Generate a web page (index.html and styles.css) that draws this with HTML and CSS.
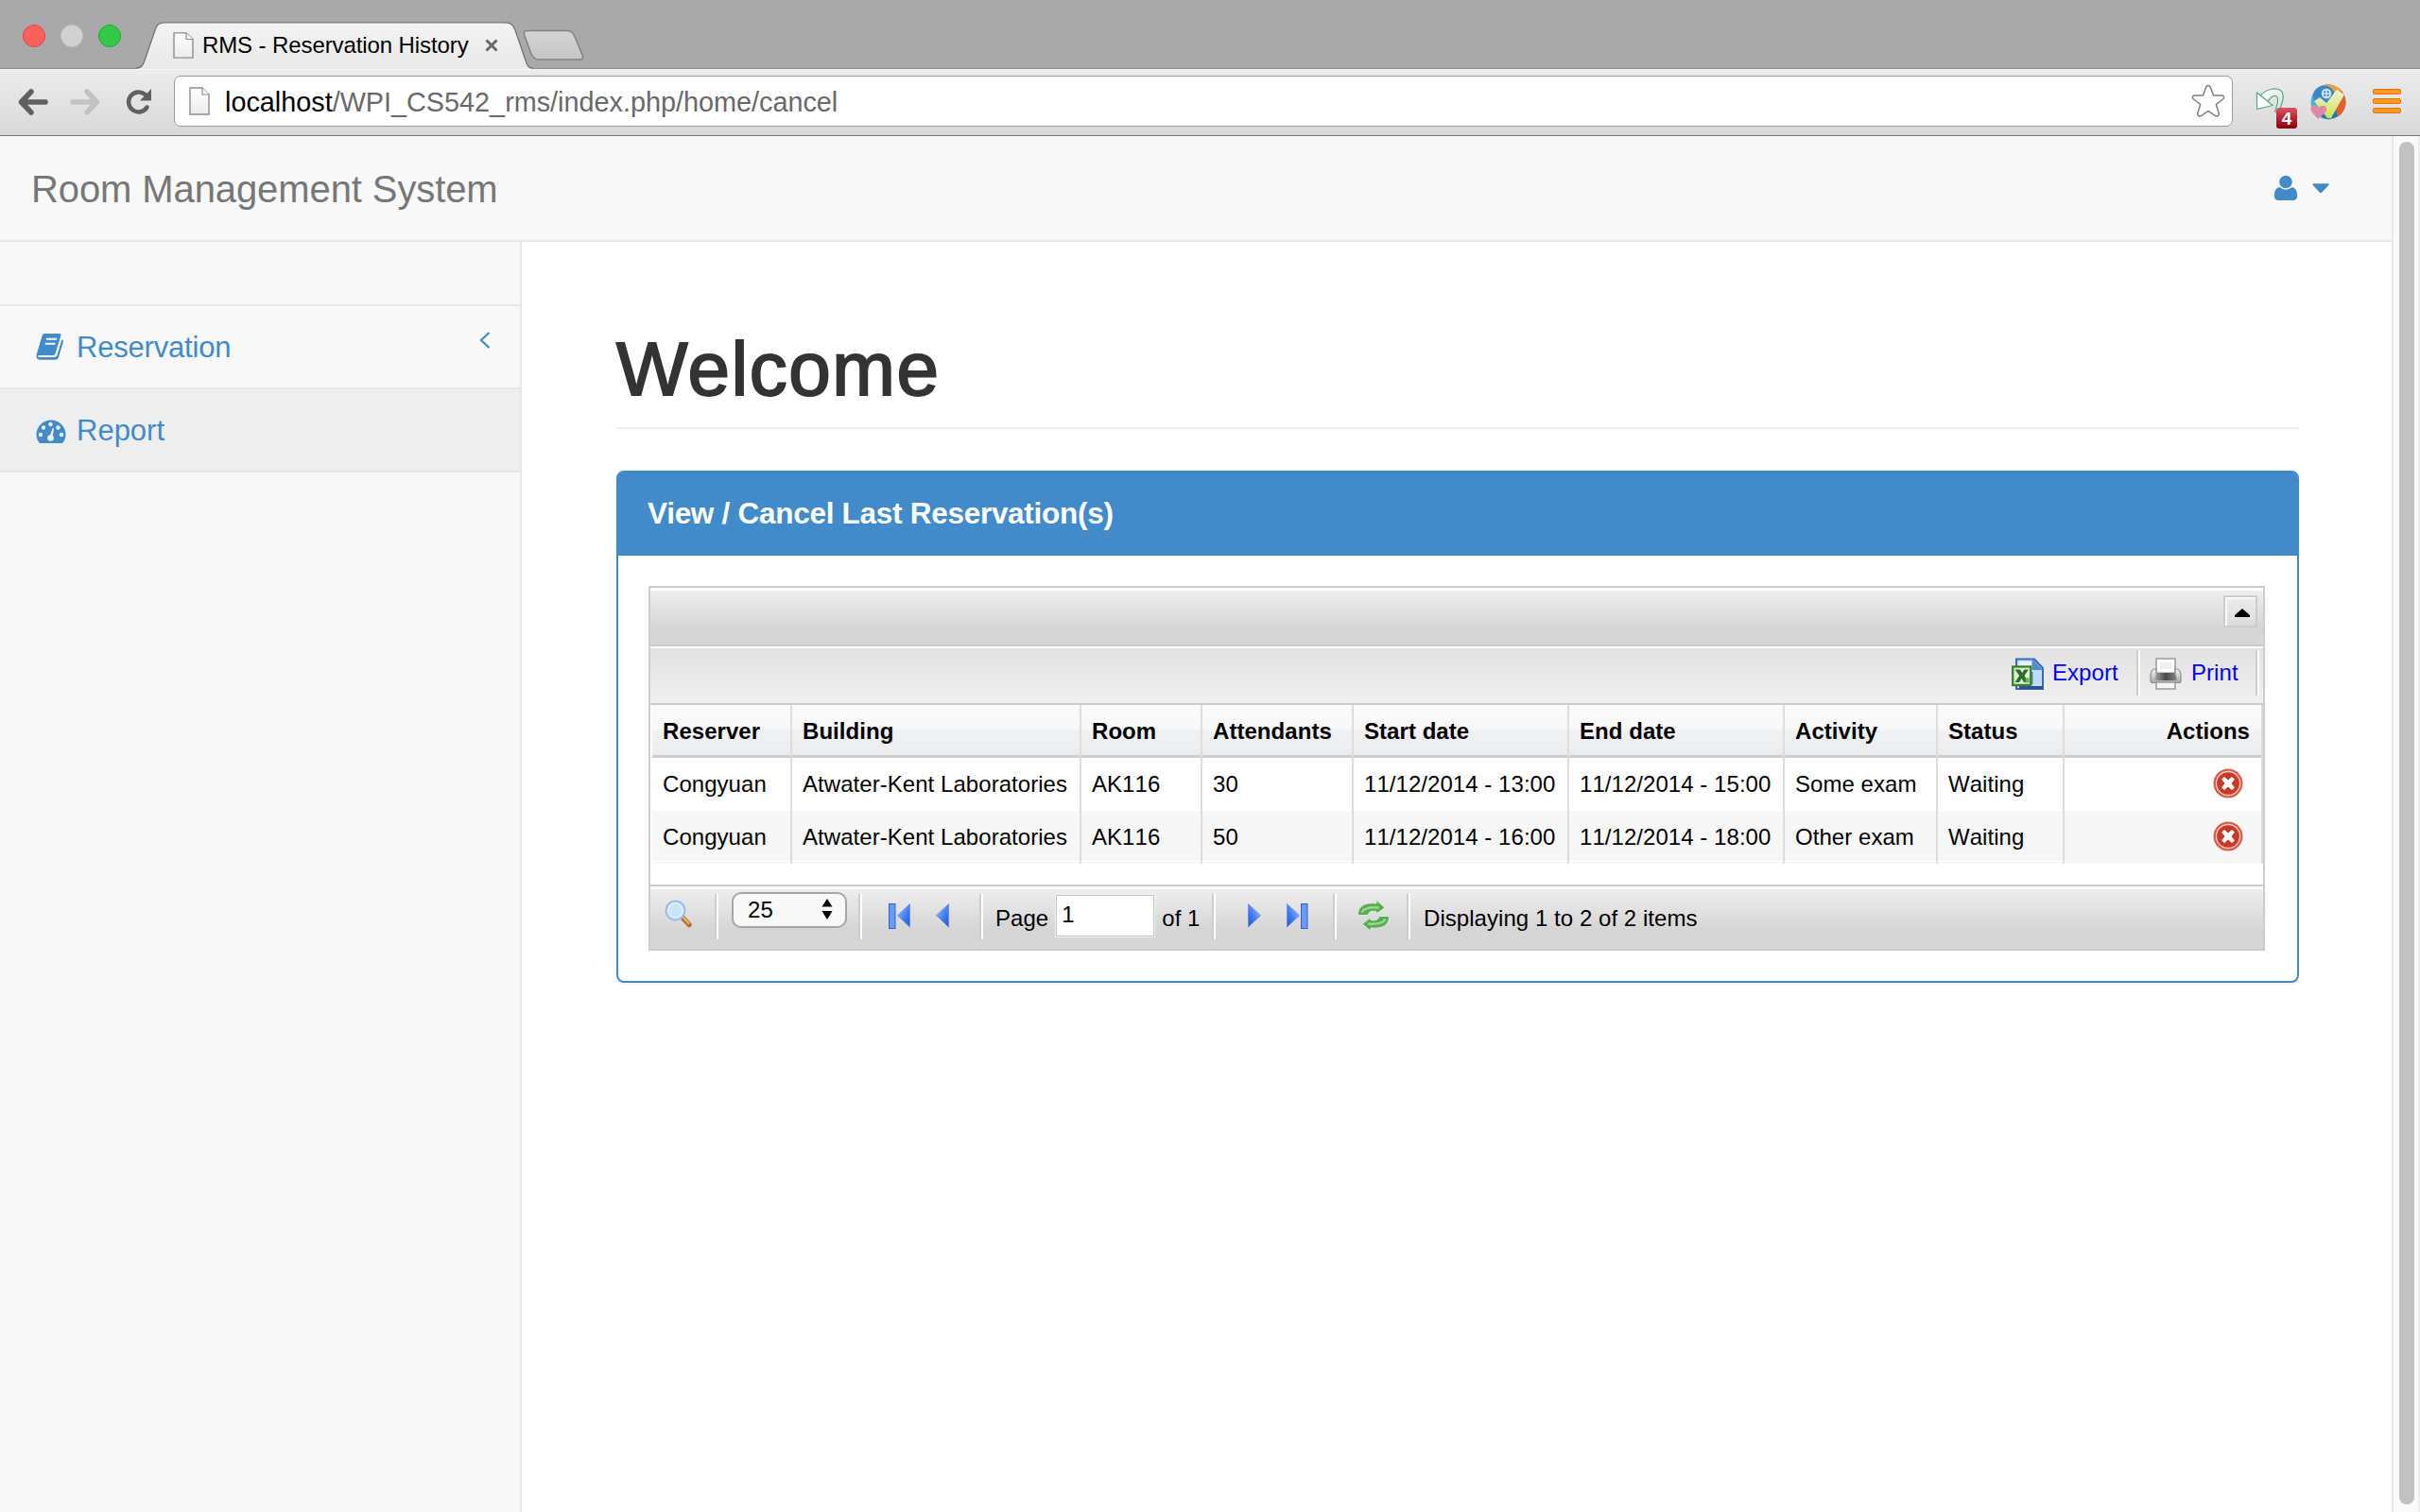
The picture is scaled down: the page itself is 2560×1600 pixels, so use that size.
FILE: index.html
```html
<!DOCTYPE html>
<html lang="en">
<head>
<meta charset="utf-8">
<title>RMS - Reservation History</title>
<link rel="stylesheet" href="styles.css">
</head>
<body>
<svg width="0" height="0" class="defs" aria-hidden="true">
  <defs>
    <linearGradient id="tabFill" x1="0" y1="0" x2="0" y2="1"><stop offset="0" stop-color="#f3f3f3"/><stop offset="1" stop-color="#e9e9e9"/></linearGradient>
    <linearGradient id="newTab" x1="0" y1="0" x2="0" y2="1"><stop offset="0" stop-color="#d4d4d4"/><stop offset="1" stop-color="#c6c6c6"/></linearGradient>
    <linearGradient id="paper" x1="0" y1="0" x2="0" y2="1"><stop offset="0" stop-color="#fff"/><stop offset="1" stop-color="#ececec"/></linearGradient>
    <linearGradient id="blue" x1="0" y1="0" x2="1" y2="1"><stop offset="0" stop-color="#a5c8ff"/><stop offset=".6" stop-color="#3f7af3"/><stop offset="1" stop-color="#2055d0"/></linearGradient>
    <linearGradient id="check" x1="0" y1="0" x2="0" y2="1"><stop offset="0" stop-color="#f4f3d8"/><stop offset="1" stop-color="#c5e64d"/></linearGradient>
    <linearGradient id="undo" x1="0" y1="0" x2="1" y2="1"><stop offset="0" stop-color="#ffffff"/><stop offset="1" stop-color="#c5e3d3"/></linearGradient>
    <linearGradient id="tray" x1="0" y1="0" x2="1" y2="0"><stop offset="0" stop-color="#aaa"/><stop offset=".5" stop-color="#484848"/><stop offset="1" stop-color="#888"/></linearGradient>
    <linearGradient id="printer" x1="0" y1="0" x2="0" y2="1"><stop offset="0" stop-color="#f4f4f4"/><stop offset="1" stop-color="#a9a9a9"/></linearGradient>
    <symbol id="doc" viewBox="0 0 22 30"><path d="M1 1H14L21 8V29H1Z" fill="url(#paper)" stroke="#8d8d8d" stroke-width="1.4"/><path d="M14 1V8H21" fill="#fff" stroke="#8d8d8d" stroke-width="1.2"/></symbol>
    <symbol id="arrow" viewBox="0 0 32 28"><path d="M14 3L3.500 14L14 25M4 14H29" fill="none" stroke="currentColor" stroke-width="5.500" stroke-linecap="round" stroke-linejoin="round"/></symbol>
    <symbol id="cancel" viewBox="0 0 32 32"><circle cx="16" cy="16" r="15.500" fill="#d9614f"/><circle cx="16" cy="16" r="12.500" fill="#c93a26" stroke="#f5cdc5" stroke-width="1.300"/><path d="M9 11.500L12 9l4 3.500L20 9l3 2.500L19.500 16l3.500 4.500L20 23l-4-3.500L12 23l-3-2.500L12.500 16Z" fill="#fff"/></symbol>
    <symbol id="tri" viewBox="0 0 14 26"><path d="M13.500 .5V25L.5 12.800Z" fill="url(#blue)" stroke="#5f8de6" stroke-width=".8"/></symbol>
  </defs>
</svg>

<div class="tabstrip">
  <span class="light light-red"></span>
  <span class="light light-gray"></span>
  <span class="light light-green"></span>
  <div class="tab">
    <svg class="tab-shape" width="420" height="50" viewBox="0 0 420 50"><path d="M0 49.500C6 49.500 7 46 9 41L20 9C22 3 24 .8 30 .8H390C397 .8 399 4 401 9L412 41C414 47 415 49.500 420 49.500V50H0Z" fill="url(#tabFill)"/><path d="M0 49C6 49 7 46 9 41L20 9C22 3 24 .8 30 .8H390C397 .8 399 4 401 9L412 41C414 47 415 49 420 49" fill="none" stroke="#747474" stroke-width="1.300"/></svg>
    <svg class="tab-icon" width="22" height="28" viewBox="0 0 22 30" preserveAspectRatio="none"><use href="#doc"/></svg>
    <span class="tab-title">RMS - Reservation History</span>
    <svg class="tab-close" width="14" height="14" viewBox="0 0 14 14"><path d="M1.500 1.500L12.500 12.500M12.500 1.500L1.500 12.500" stroke="#6b6b6b" stroke-width="3" fill="none"/></svg>
  </div>
  <svg class="new-tab" width="66" height="34" viewBox="0 0 66 34"><path d="M5 1.500H46C51 1.500 53 3 55 8L63 27C64.500 31 63.500 32 60 32H17C13 32 11 30 9 26L2 7C.5 3 1 1.500 5 1.500Z" fill="url(#newTab)" stroke="#828282" stroke-width="1.500"/></svg>
</div>

<div class="toolbar">
  <svg class="back" width="32" height="28"><use href="#arrow"/></svg>
  <svg class="forward" width="32" height="28"><use href="#arrow"/></svg>
  <svg class="reload" width="28" height="28" viewBox="0 0 28 28"><path d="M22.500 19.500A10.500 10.500 0 1 1 20.500 6" fill="none" stroke="#606060" stroke-width="4.500" stroke-linecap="round"/><path d="M27 0V12.500H15Z" fill="#606060"/></svg>
  <div class="omnibox">
    <svg width="22" height="30"><use href="#doc"/></svg>
    <span class="url"><b>localhost</b>/WPI_CS542_rms/index.php/home/cancel</span>
    <svg class="star" width="36" height="36" viewBox="0 0 36 36"><path d="M18 1.500Q20 1.500 20.700 4L23.500 12H32.500Q36 13 33.800 15.800L26.300 21.500L29.300 31Q29.300 35 25.800 33.800L18 28.500L10.200 33.800Q6.700 35 6.700 31L9.700 21.500L2.200 15.800Q0 13 3.500 12H12.500L15.300 4Q16 1.500 18 1.500Z" fill="#fff" stroke="#808080" stroke-width="1.500"/></svg>
  </div>
  <div class="ext">
    <svg width="32" height="30" viewBox="0 0 32 30"><path d="M5 8.500C10 2 22-2 27.500 3.500C32 10 27 17 24.500 27L20.500 25C23.500 17 25 10 21.500 8.500C18 7.500 15 11 13 15Z" fill="url(#undo)" stroke="#5aa583" stroke-width="1.200"/><path d="M1.500 5L18 18.500L1.500 22.500Z" fill="#fff" stroke="#5aa583" stroke-width="1.200"/></svg>
    <span class="ext-badge">4</span>
  </div>
  <svg class="ball" width="38" height="38" viewBox="0 0 38 38"><circle cx="19" cy="19" r="18.500" fill="#3cb4dc"/><path d="M12 2A18.500 18.500 0 0 1 30 34L19 19Z" fill="#e5602f"/><path d="M12 2A18.500 18.500 0 0 1 33 7L20 14Z" fill="#f0a03a"/><circle cx="14.500" cy="13" r="11.500" fill="#3b88c8"/><path d="M12 35Q20 39 29 34L26 24H12Z" fill="#2b6fae"/><circle cx="17" cy="10" r="4.200" fill="none" stroke="#d5e8f6" stroke-width="2"/><path d="M17 6V14M13 10H21" stroke="#d5e8f6" stroke-width="1.500"/><path d="M4 18L10 14L17 20L28 6L36 11L22 36H18Z" fill="url(#check)"/><path d="M8 37L1 29Q-1 23 4 22Q8 22 9 25Q11 22 15 23Q19 25 16 30Z" fill="#e088a8"/></svg>
  <div class="menu"><i></i><i></i><i></i></div>
</div>

<div class="viewport">
  <div class="page">
    <header class="navbar">
      <span class="brand">Room Management System</span>
      <div class="user">
        <svg width="26" height="28" viewBox="0 0 26 28"><circle cx="13" cy="7.500" r="6.800" fill="#428bca"/><path d="M6.500 13Q13 18.500 19.500 13Q25.200 14 25.200 22Q25.200 27 20.500 27H5.500Q.8 27 .8 22Q.8 14 6.500 13Z" fill="#428bca"/></svg>
        <svg width="18" height="11" viewBox="0 0 18 11"><path d="M1 .3H17Q18 1 17.500 1.800L10 9.800Q9 10.600 8 9.800L.5 1.800Q0 1 1 .3Z" fill="#428bca"/></svg>
      </div>
    </header>
    <div class="main">
      <nav class="sidebar">
        <div class="side-search"></div>
        <a class="side-item">
          <svg width="30" height="30" viewBox="0 0 30 30"><path d="M9 1H25Q27 1 26.300 3.500L20.500 22.500Q20 24 18 24H3.500Q2 24.500 3 26H19.500Q21.500 26 22.200 24L27.500 7Q29.500 8 28.800 10L23.800 26.500Q22.800 28.800 20.500 28.800H4Q0 28.500 .6 23.500L6.500 3.500Q7.300 1 9 1Z" fill="#428bca"/><path d="M11 6.800H22M9.800 11.800H20.500" stroke="#f8f8f8" stroke-width="1.900"/><path d="M2.500 25H19.500Q21 25 21.500 23.500L26.500 7" fill="none" stroke="#f8f8f8" stroke-width="1.600"/></svg>
          <span>Reservation</span>
          <svg class="chevron" width="12" height="18" viewBox="0 0 12 18"><path d="M10.500 1L2 9L10.500 17" fill="none" stroke="#428bca" stroke-width="2.200"/></svg>
        </a>
        <a class="side-item active">
          <svg width="32" height="26" viewBox="0 0 32 26"><path d="M4 25Q.5 21 .5 16A15.500 15.500 0 0 1 31.500 16Q31.500 21 28 25Z" fill="#428bca"/><g fill="#eee"><circle cx="5" cy="16" r="2.200"/><circle cx="8" cy="8.500" r="2.200"/><circle cx="15.500" cy="5" r="2.200"/><circle cx="23.500" cy="8.500" r="2.200"/><circle cx="27" cy="16" r="2.200"/><circle cx="15.500" cy="19.500" r="3.300"/><path d="M14.500 18L17.600 9L19 9.400L17.500 19Z"/></g></svg>
          <span>Report</span>
        </a>
      </nav>
      <main class="content">
        <h1>Welcome</h1>
        <section class="panel">
          <div class="panel-heading">View / Cancel Last Reservation(s)</div>
          <div class="panel-body">
            <div class="grid">
              <div class="grid-title"><span class="collapse"><svg width="16" height="9" viewBox="0 0 16 9"><path d="M8 0L16 7V9H0V7Z" fill="#000"/></svg></span></div>
              <div class="grid-tools">
                <a class="tool export">
                  <svg width="34" height="34" viewBox="0 0 34 34"><path d="M5 1.500H24L33 11V33H5Z" fill="#c3dbfb" stroke="#3a69b5" stroke-width="2"/><path d="M8 4H22V30H8Z" fill="#e6f1ff"/><path d="M21.500 1V13H33Z" fill="#5588cf"/><path d="M8 31.500H33" stroke="#2c4f98" stroke-width="3"/><path d="M20 15V28" stroke="#5585cc" stroke-width="5"/><rect x="1.200" y="9.500" width="19" height="19.500" fill="#dcefd8" stroke="#39852f" stroke-width="2.400"/><path d="M3.500 12.500H9L11 16L13.500 12.500H18L13.500 19L18 26H13L10.500 22L8 26H3.500L8.200 19Z" fill="#2c6e28"/><path d="M14.500 21.500h4v5h-4z" fill="#6cb052"/></svg>
                  <span>Export</span>
                </a>
                <i class="sep"></i>
                <a class="tool print">
                  <svg width="34" height="34" viewBox="0 0 34 34"><path d="M7 1H27V18H7Z" fill="#fff" stroke="#999" stroke-width="1.500"/><path d="M11 5H23V12H11Z" fill="#efefef"/><path d="M1 18Q2 12 5 12H7V16H27V12H29Q32 12 33 18V24Q33 26.500 31 26.500H3Q1 26.500 1 24Z" fill="url(#printer)" stroke="#8d8d8d" stroke-width="1.200"/><path d="M7 16H27L29 24H5Z" fill="url(#tray)"/><path d="M7 26H27V33H7Z" fill="#f6f6f6" stroke="#999" stroke-width="1.500"/></svg>
                  <span>Print</span>
                </a>
                <i class="sep"></i>
              </div>
              <div class="rows">
                <div class="row head"><span>Reserver</span><span>Building</span><span>Room</span><span>Attendants</span><span>Start date</span><span>End date</span><span>Activity</span><span>Status</span><span class="act">Actions</span></div>
                <div class="row"><span>Congyuan</span><span>Atwater-Kent Laboratories</span><span>AK116</span><span>30</span><span>11/12/2014 - 13:00</span><span>11/12/2014 - 15:00</span><span>Some exam</span><span>Waiting</span><span class="act"><svg width="32" height="32"><use href="#cancel"/></svg></span></div>
                <div class="row odd"><span>Congyuan</span><span>Atwater-Kent Laboratories</span><span>AK116</span><span>50</span><span>11/12/2014 - 16:00</span><span>11/12/2014 - 18:00</span><span>Other exam</span><span>Waiting</span><span class="act"><svg width="32" height="32"><use href="#cancel"/></svg></span></div>
              </div>
              <div class="pager">
                <div class="group g-search"><svg width="30" height="30" viewBox="0 0 30 30"><path d="M20 20L26 26.500" stroke="#b87328" stroke-width="5.500" stroke-linecap="round"/><path d="M20.500 19.500L25.500 25" stroke="#eab774" stroke-width="2" stroke-linecap="round"/><circle cx="11.500" cy="11.500" r="10" fill="#bddcf8" stroke="#9dbdeb" stroke-width="2"/><circle cx="11.500" cy="11.500" r="7.700" fill="#c8e3fa" stroke="#e6f3ff" stroke-width="1.500"/></svg></div>
                <i class="sep"></i>
                <div class="group g-size"><div class="select"><span>25</span><svg width="12" height="24" viewBox="0 0 12 24"><path d="M6 1L11.500 9.500H.5ZM6 23L.5 14H11.500Z" fill="#000"/></svg></div></div>
                <i class="sep"></i>
                <div class="group g-prev"><svg width="8" height="27" viewBox="0 0 8 27"><rect x=".5" y=".5" width="6.500" height="26" fill="#6a9af6" stroke="#2f62d2"/></svg><svg class="p1" width="14" height="26"><use href="#tri"/></svg><svg class="p2" width="14" height="26"><use href="#tri"/></svg></div>
                <i class="sep"></i>
                <div class="group g-page"><span>Page</span><div class="input">1</div><span>of 1</span></div>
                <i class="sep"></i>
                <div class="group g-next"><svg class="flip" width="14" height="26"><use href="#tri"/></svg><svg class="flip n2" width="14" height="26"><use href="#tri"/></svg><svg class="n3" width="8" height="27" viewBox="0 0 8 27"><rect x=".5" y=".5" width="6.500" height="26" fill="#6a9af6" stroke="#2f62d2"/></svg></div>
                <i class="sep"></i>
                <div class="group g-reload"><svg width="34" height="34" viewBox="0 0 34 34"><g id="half"><path d="M.5 16.500C0 7 8 2.500 20 4V.5L29 8.500L20 15V12.500C14 11.500 12 13 11 16.500Z" fill="#58ad53" stroke="#d8efd4" stroke-width="1"/><path d="M4.500 13.500Q8 7 23 8.500" stroke="#9ad592" stroke-width="2.600" fill="none"/></g><use href="#half" transform="rotate(180 17 17)"/></svg></div>
                <i class="sep"></i>
                <div class="group g-info">Displaying 1 to 2 of 2 items</div>
              </div>
            </div>
          </div>
        </section>
      </main>
    </div>
  </div>
  <div class="scrollbar"><div class="thumb"></div></div>
</div>
</body>
</html>
```
FILE: styles.css
```css
* { box-sizing: border-box; }
body {
  margin: 0;
  width: 2560px;
  height: 1600px;
  overflow: hidden;
  display: flex;
  flex-direction: column;
  background: #fff;
  font-family: "Liberation Sans", Arial, sans-serif;
  color: #000;
}
svg { display: block; flex: none; }
.defs { position: absolute; }

/* browser window */
.tabstrip {
  height: 73px;
  flex: none;
  display: flex;
  padding-left: 24px;
  background: #a9a9a9;
  border-bottom: 1px solid #8a8a8a;
}
.light {
  width: 24px;
  height: 24px;
  margin: 26px 16px 0 0;
  border-radius: 50%;
  border: 1px solid;
}
.light-red { background: #fc605b; border-color: #de4643; }
.light-gray { background: #d1d1d1; border-color: #c2c2c2; }
.light-green { background: #34c84a; border-color: #20a734; }
.tab {
  position: relative;
  width: 420px;
  height: 50px;
  margin-top: 23px;
  display: flex;
  align-items: flex-start;
  padding-left: 39px;
}
.tab-shape { position: absolute; left: 0; top: 0; }
.tab-icon { position: relative; margin: 11px 8px 0 0; }
.tab-title {
  position: relative;
  width: 290px;
  margin-top: 11px;
  line-height: 28px;
  font-size: 24px;
  letter-spacing: -.1px;
  padding-left: 1px;
  white-space: nowrap;
}
.tab-close { position: relative; margin: 18px 0 0 10px; }
.new-tab { margin: 31px 0 0 -11px; }

.toolbar {
  height: 71px;
  flex: none;
  display: flex;
  background: linear-gradient(#ececec, #d9d9d9);
  border-top: 1px solid #f6f6f6;
  border-bottom: 1px solid #767676;
}
.back { margin: 20px 23px 0 19px; color: #606060; }
.forward { margin: 20px 27px 0 0; color: #c3c3c3; transform: scaleX(-1); }
.reload { margin: 20px 23px 0 0; }
.omnibox {
  width: 2178px;
  height: 54px;
  margin-top: 6px;
  display: flex;
  align-items: center;
  padding: 0 8px 0 15px;
  background: #fff;
  border: 1px solid #999;
  border-radius: 7px;
}
.url {
  flex: 1;
  padding-left: 16px;
  font-size: 28.8px;
  line-height: 32px;
  margin-top: 2px;
  color: #696969;
  white-space: nowrap;
}
.url b { font-weight: normal; color: #000; }
.star { margin-right: -1px; }
.ext { position: relative; margin: 19px 0 0 24px; width: 32px; height: 44px; }
.ext-badge {
  position: absolute;
  left: 22px;
  top: 21px;
  width: 22px;
  height: 22px;
  border-radius: 3px;
  background: linear-gradient(#dc5560, #b32634 50%, #85000f);
  color: #fff;
  font: bold 19px/24px "Liberation Sans", Arial, sans-serif;
  text-align: center;
}
.ball { margin: 15px 0 0 26px; }
.menu { margin: 20px 0 0 28px; width: 30px; display: flex; flex-direction: column; gap: 4px; }
.menu i {
  height: 6px;
  border-radius: 2px;
  background: #fb9a1c;
  border: 1px solid #e8710e;
}

/* page */
.viewport { flex: 1; display: flex; min-height: 0; }
.page { width: 2530px; display: flex; flex-direction: column; }
.scrollbar {
  width: 30px;
  padding: 6px 4px 8px 6px;
  background: #fafafa;
  border-left: 2px solid #e8e8e8;
  border-right: 2px solid #ededed;
}
.thumb { width: 16px; height: 100%; border-radius: 8px; background: #c1c1c1; }
.navbar {
  height: 112px;
  flex: none;
  display: flex;
  justify-content: space-between;
  padding: 0 66px 0 33px;
  background: #f8f8f8;
  border-bottom: 2px solid #e7e7e7;
}
.brand { margin-top: 33px; font-size: 40px; line-height: 46px; color: #777; letter-spacing: -.1px; }
.user { display: flex; gap: 15px; padding-top: 41px; }
.user svg + svg { margin-top: 9px; }
.main { flex: 1; display: flex; }
.sidebar { width: 552px; background: #f8f8f8; border-right: 2px solid #e7e7e7; }
.side-search { height: 68px; border-bottom: 2px solid #e7e7e7; }
.side-item {
  height: 88px;
  display: flex;
  padding: 28px 29px 0 38px;
  border-bottom: 2px solid #e7e7e7;
  font-size: 31px;
  line-height: 32px;
  letter-spacing: -.2px;
  color: #428bca;
}
.side-item span { padding-left: 13px; flex: 1; }
.side-item .chevron { margin-top: -1px; margin-right: 2px; }
.side-item.active { background: #eee; letter-spacing: 0; }
.side-item.active svg { margin-top: 4px; }
.side-item.active span { padding-left: 11px; }
.content { flex: 1; padding: 0 98px 0 100px; }
h1 {
  margin: 0;
  height: 198px;
  padding-top: 91px;
  font-size: 80px;
  line-height: 88px;
  font-weight: normal;
  letter-spacing: 1.5px;
  color: #333;
  -webkit-text-stroke: 2px #333;
  border-bottom: 2px solid #eee;
}
.panel {
  height: 542px;
  margin-top: 44px;
  border: 2px solid #428bca;
  border-radius: 8px;
  box-shadow: 0 2px 2px rgba(0,0,0,.05);
}
.panel-heading {
  height: 88px;
  padding: 0 31px;
  border-radius: 5px 5px 0 0;
  background: #428bca;
  color: #fff;
  font-size: 31.5px;
  line-height: 86px;
  font-weight: bold;
  letter-spacing: -.28px;
}
.panel-body { padding: 32px; }

/* data grid */
.grid {
  width: 1710px;
  height: 386px;
  border: 2px solid #ccc;
  font-size: 24px;
  font-kerning: none;
  letter-spacing: .05px;
}
.grid-title {
  height: 62px;
  display: flex;
  justify-content: flex-end;
  padding: 5px 6px 0 0;
  border-top: 3px solid #fff;
  border-bottom: 2px solid #c9c9c9;
  background: linear-gradient(#eee, #d5d5d5 70%, #d7d7d7);
}
.collapse {
  width: 36px;
  height: 34px;
  padding: 12px 0 0 10px;
  border: 2px solid #ccc;
  background: linear-gradient(#ececec, #dcdcdc);
  box-shadow: inset 2px 2px 0 #fafafa;
}
.grid-tools {
  height: 62px;
  display: flex;
  justify-content: flex-end;
  padding: 2px 4px 0 0;
  border-top: 2px solid #fff;
  border-bottom: 2px solid #ccc;
  background: linear-gradient(#e2e2e2, #f0f0f0);
}
.tool { display: flex; color: #00f; line-height: 28px; }
.tool svg { margin-top: 8px; }
.tool span { margin-top: 10px; }
.export { width: 132px; gap: 9px; }
.print { width: 122px; padding-left: 10px; gap: 10px; }
.sep { width: 4px; height: 48px; flex: none; background: linear-gradient(90deg, #ccc 50%, #fff 50%); }
.rows { padding: 0 0 0 2px; height: 190px; }
.row {
  display: grid;
  grid-template-columns: 148px 306px 128px 160px 228px 228px 162px 134px 210px;
  height: 56px;
  line-height: 56px;
  white-space: nowrap;
}
.row span { padding-left: 11px; border-right: 2px solid #ddd; }
.head {
  font-weight: bold;
  background: linear-gradient(#fafafa, #f8f8f8 45%, #f0f1f3 50%, #ebecee 95%, #ccc 95%);
}
.odd { background: #f7f7f7; }
.odd span:not(.act) { background: linear-gradient(transparent 53px, #fff 53px, #fff 54px, transparent 54px); }
.row .act { display: flex; justify-content: flex-end; padding-right: 12px; }
.row .act svg { margin: 11px 7px 0 0; }
.pager {
  height: 68px;
  display: flex;
  padding-top: 5px;
  border-top: 2px solid #ccc;
  background: linear-gradient(#fff 3px, #eee 3px, #d5d5d5 70%, #d7d7d7);
}
.group { display: flex; flex: none; }
.pager .sep { margin-top: 3px; }
.g-search { width: 68px; padding: 9px 0 0 15px; }
.g-size { width: 148px; padding: 1px 0 0 14px; }
.select {
  width: 122px;
  height: 38px;
  display: flex;
  justify-content: space-between;
  padding: 4px 13px 0 15px;
  border: 2px solid #a6a6a6;
  border-radius: 10px;
  background: #f8f8f8;
  line-height: 25px;
}
.g-prev { width: 124px; padding: 13px 0 0 28px; }
.p1 { margin-left: 1px; }
.p2 { margin-left: 27px; }
.g-page { width: 242px; padding-left: 13px; line-height: 28px; }
.g-page span { margin-top: 15px; }
.input {
  width: 106px;
  height: 46px;
  margin: 3px 7px 0 7px;
  padding: 6px 0 0 5px;
  border: 2px solid #c3c3c3;
  outline: 1px solid #f2f2f2;
  outline-offset: -1px;
  background: #fff;
}
.g-next { width: 124px; padding: 13px 0 0 34px; }
.flip { transform: scaleX(-1); }
.n2 { margin-left: 27px; }
.n3 { margin-left: 1px; }
.g-reload { width: 74px; padding: 9px 0 0 22px; }
.g-info { padding: 15px 0 0 14px; line-height: 28px; }
```
